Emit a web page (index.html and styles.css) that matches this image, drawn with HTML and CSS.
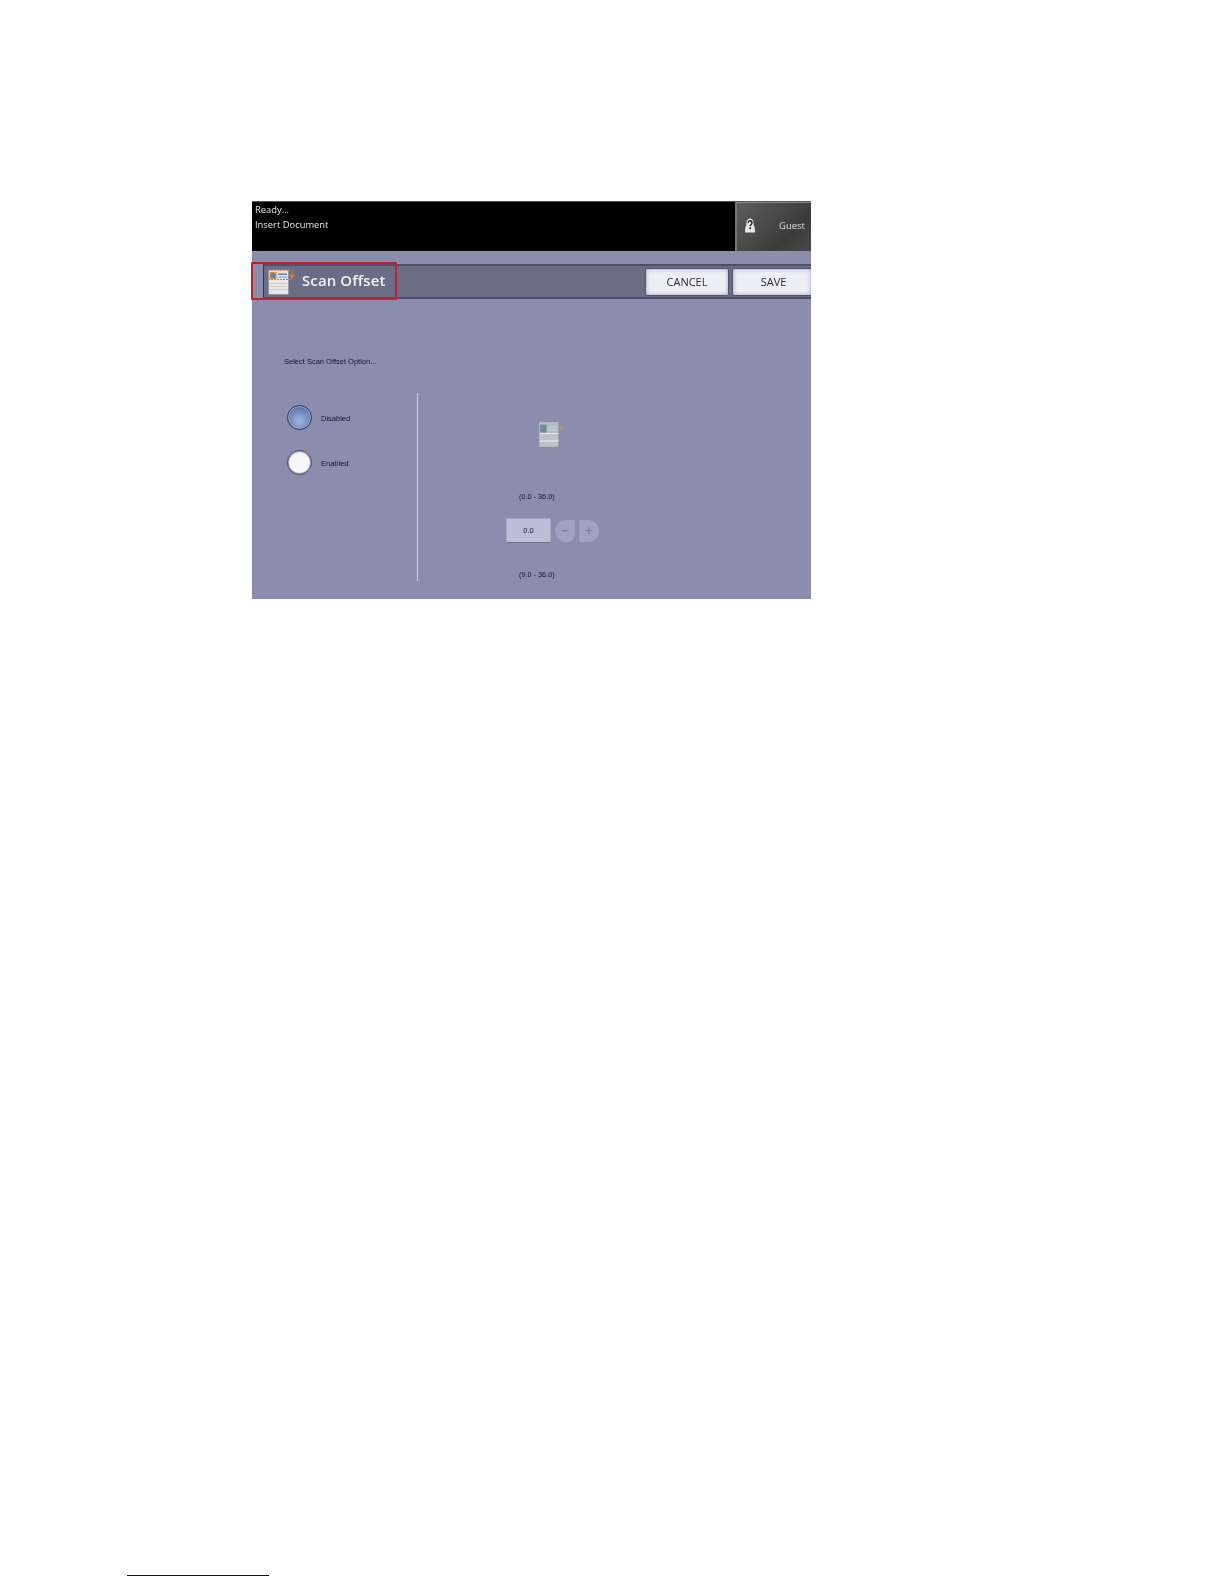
FILE: index.html
```html
<!DOCTYPE html>
<html lang="en">
<head>
<meta charset="utf-8">
<title>Scan Offset</title>
<link rel="stylesheet" href="styles.css">
</head>
<body>
<div class="page">
  <section class="screen">
    <header class="status">
      <div class="status-text">
        <div>Ready...</div>
        <div>Insert Document</div>
      </div>
      <div class="guest">
        <svg class="guest-icon" viewBox="0 0 10 15" aria-hidden="true">
          <path d="M1.500 5C1.500 2 3 .5 5 .5S8.500 2 8.500 5c0 2 .5 3 1 4 .4.800.5 5.500.5 5.500H0s.1-4.700.5-5.500c.5-1 1-2 1-4z" fill="#e8e8e8"/>
          <path d="M3.200 5c0-1.400.8-2.200 1.900-2.200S7 3.500 7 4.700c0 1.700-1.800 1.700-1.800 3.600" fill="none" stroke="#1c1c1c" stroke-width="1.400"/>
          <rect x="4.400" y="9.400" width="1.600" height="1.700" fill="#1c1c1c"/>
        </svg>
        <span class="guest-label">Guest</span>
      </div>
    </header>
    <div class="title-row">
      <div class="title-bar">
        <svg class="doc-icon" viewBox="0 0 27 26" aria-hidden="true">
          <rect x=".5" y="1" width="20" height="24.500" fill="#e6e8e6" stroke="#8d8f98" stroke-width=".7"/>
          <rect x="1" y="1.500" width="19" height="8.500" fill="#dfe4ee"/>
          <rect x="1.500" y="3" width="7" height="7" fill="#d8913f"/>
          <circle cx="5" cy="6.500" r="2.600" fill="#4d86bd"/>
          <rect x="10" y="4.500" width="9" height="1.500" fill="#6f83a8"/>
          <rect x="10" y="7.500" width="9" height="1.200" fill="#9aa6bc"/>
          <path d="M1.500 14.500h18M1.500 17.500h18M1.500 20.500h18" stroke="#c9cacc" stroke-width="1"/>
          <path d="M0 1.200h24M0 10.500h24" stroke="#d8773c" stroke-width="1" stroke-dasharray="2 1"/>
          <path d="M24 1.500v6M21.800 6 24 10l2.200-4z" fill="#dd7a35" stroke="#dd7a35" stroke-width="1"/>
        </svg>
        <h1 class="title">Scan Offset</h1>
        <div class="actions">
          <button class="action action-cancel">CANCEL</button>
          <button class="action action-save">SAVE</button>
        </div>
      </div>
      <div class="highlight"></div>
    </div>
    <main class="content">
      <div class="options">
        <p class="prompt">Select Scan Offset Option...</p>
        <div class="option-list">
          <div class="option"><span class="radio radio-on"></span><span class="option-label">Disabled</span></div>
          <div class="option"><span class="radio"></span><span class="option-label">Enabled</span></div>
        </div>
      </div>
      <div class="detail">
        <svg class="detail-icon" viewBox="0 0 25 26" aria-hidden="true">
          <rect x="1" y="1" width="19.500" height="25" fill="#bfc3c6" stroke="#8c8c92" stroke-width=".7" stroke-dasharray="1.500 1"/>
          <rect x="1.500" y="2.500" width="18.500" height="10" fill="#b3bbc6"/>
          <rect x="2" y="3.500" width="6.500" height="8" fill="#6f8ba0"/>
          <path d="M10 6h9.500M10 9h9.500" stroke="#cdd2d8" stroke-width="1"/>
          <path d="M1.500 12.500h19M1.500 20h19" stroke="#eaeaea" stroke-width="1"/>
          <path d="M23 2v5M21.600 5.500 23 9l1.400-3.500z" fill="#b59468" stroke="#b59468" stroke-width=".8"/>
        </svg>
        <div class="range range-top">(0.0 - 36.0)</div>
        <div class="stepper">
          <div class="value">0.0</div>
          <button class="step step-minus">−</button>
          <button class="step step-plus">+</button>
        </div>
        <div class="range range-bottom">(9.0 - 36.0)</div>
      </div>
    </main>
  </section>
  <div class="footnote-rule"></div>
</div>
</body>
</html>
```

FILE: styles.css
```css
* { box-sizing: border-box; }
html, body { margin: 0; padding: 0; background: #fff; }
.page {
  height: 1584px;
  overflow: hidden;
  padding: 201px 0 8px;
  display: flex;
  flex-direction: column;
  font-family: "Liberation Sans", Arial, sans-serif;
}
.screen {
  width: 559px;
  height: 398px;
  margin-left: 252px;
  background: #8b8dad;
  display: flex;
  flex-direction: column;
  filter: blur(.4px);
  flex: none;
}
.status {
  height: 50px;
  background: #000;
  border-top: 1px solid #555;
  display: flex;
  justify-content: space-between;
  flex: none;
}
.status-text {
  padding: 1px 0 0 3px;
  color: #e4e4e4;
  font-family: "Open Sans", sans-serif;
  font-size: 9.400px;
  line-height: 14.500px;
}
.guest {
  width: 76px;
  background: linear-gradient(135deg, #5d5d5d, #3b3b3b 70%, #4a4a4a);
  border-left: 2px solid #77777a;
  border-top: 1px solid #888;
  display: flex;
  align-items: center;
  padding: 0 6px 3px 8px;
  justify-content: space-between;
}
.guest-icon { width: 10px; height: 15px; }
.guest-label { color: #dcdcdc; font-family: "Open Sans", sans-serif; font-size: 9.500px; }
.title-row { position: relative; margin-top: 13px; padding-left: 11px; flex: none; }
.title-bar {
  height: 35px;
  background: #6b6c85;
  border-top: 2px solid #4e4f68;
  border-bottom: 2px solid #4e4f68;
  border-left: 1px solid #33344a;
  display: flex;
  align-items: center;
  padding-left: 4px;
}
.doc-icon { width: 27px; height: 26px; flex: none; }
.title {
  margin: 0 0 4px 7px;
  color: #f2f2f4;
  font-family: "Open Sans", sans-serif;
  font-size: 15px;
  font-weight: 600;
  letter-spacing: .1px;
}
.actions { margin-left: auto; display: flex; gap: 3px; }
.action {
  height: 28px;
  padding: 0;
  border: 1px solid #50516b;
  border-radius: 2px;
  background: #eeeef5;
  box-shadow: inset 0 0 4px #9fa0bc;
  color: #2a2a30;
  font-family: "Open Sans", sans-serif;
  font-size: 11px;
}
.action-cancel { width: 84px; }
.action-save { width: 79px; padding-left: 3px; border-right: 0; border-radius: 2px 0 0 2px; }
.highlight {
  position: absolute;
  left: -1px;
  top: -2px;
  width: 146px;
  height: 38px;
  border: 2px solid #c5202c;
  border-radius: 1px;
}
.content { flex: 1; display: flex; min-height: 0; }
.options {
  width: 166px;
  margin-bottom: 18px;
  padding-left: 32px;
  background: linear-gradient(#d2d3e0, #d2d3e0) right 94px / 1px calc(100% - 94px) no-repeat;
  flex: none;
}
.prompt {
  margin: 57px 0 0;
  color: #14152c;
  font-size: 7.500px;
  line-height: 12px;
}
.option-list { margin: 37px 0 0 3px; display: flex; flex-direction: column; gap: 20px; }
.option { display: flex; align-items: center; gap: 9px; }
.radio {
  width: 25px;
  height: 25px;
  border-radius: 50%;
  border: 1px solid #4a4b66;
  background: radial-gradient(circle at 50% 60%, #f6f6f8 0 55%, #dcdce6 100%);
  box-shadow: 0 0 0 1px #a7a8c0 inset;
}
.radio-on {
  border-color: #2c3560;
  background: radial-gradient(circle at 50% 65%, #a4b6e0 0, #6f86bd 55%, #3f4f86 100%);
}
.option-label { padding-top: 2px; color: #14152c; font-size: 7.500px; }
.detail { flex: 1; padding-left: 88px; display: flex; flex-direction: column; align-items: flex-start; }
.detail-icon { width: 25px; height: 26px; margin: 122px 0 0 32px; }
.range {
  color: #14152c;
  font-size: 7.300px;
  line-height: 10px;
  margin-left: 13px;
}
.range-top { margin-top: 45px; }
.range-bottom { margin-top: 27px; }
.stepper { display: flex; align-items: center; margin-top: 16px; }
.value {
  width: 45px;
  height: 25px;
  display: flex;
  align-items: center;
  justify-content: center;
  background: #bcbdd6;
  border: 1px solid #a4a5c2;
  border-bottom-color: #70718f;
  color: #14152c;
  font-size: 7.500px;
}
.step {
  width: 20px;
  height: 22px;
  padding: 0;
  border: 0;
  background: #a0a2bf;
  color: #80829f;
  font-family: "Liberation Sans", sans-serif;
  font-size: 13px;
  font-weight: 700;
  line-height: 1;
}
.step-minus { margin-left: 4px; border-radius: 11px 2px 8px 11px; }
.step-plus { margin-left: 4px; border-radius: 2px 11px 11px 2px; }
.footnote-rule { margin: auto 0 0 127px; width: 142px; height: 1px; background: #00008b; flex: none; }
```
